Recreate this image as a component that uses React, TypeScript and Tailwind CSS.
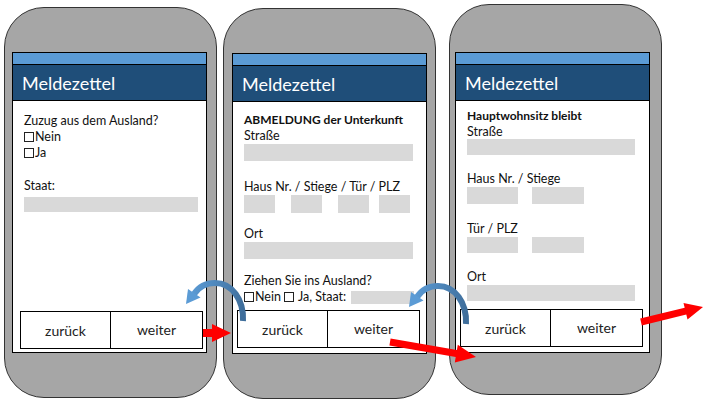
import React from 'react';

const Field = ({ className = '' }: { className?: string }) => (
  <div className={`bg-[#d9d9d9] ${className}`} />
);

const Box = () => (
  <span className="inline-block w-[10px] h-[10px] border border-[#222] align-[-1px] mr-[1px]" />
);

type PhoneProps = {
  className: string;
  screenClass: string;
  btnClass: string;
  children: React.ReactNode;
};

const Phone = ({ className, screenClass, btnClass, children }: PhoneProps) => (
  <div className={`w-[213px] h-[391px] shrink-0 rounded-[40px] border border-[#333] bg-[#a6a6a6] ${className}`}>
    <div className={`w-[195px] h-[301px] border border-black bg-white flex flex-col ${screenClass}`}>
      <div className="h-[12px] bg-[#5b9bd5] border-b border-black" />
      <div className="h-[36px] bg-[#1f4e79] border-b border-black flex items-center pl-[9px]">
        <span className="text-white text-[18px] leading-none">Meldezettel</span>
      </div>
      <div className="flex-1 flex flex-col pl-[11px] text-[12.5px] text-[#111]">
        {children}
        <div className={`mt-auto h-[38px] w-[183px] flex border border-black text-[14px] text-[#222] ${btnClass}`}>
          <div className="w-[90px] border-r border-black flex items-center justify-center">zurück</div>
          <div className="flex-1 flex items-center justify-center pb-[2px]">weiter</div>
        </div>
      </div>
    </div>
  </div>
);

function arrow(x1: number, y1: number, x2: number, y2: number, sw: number, hl: number, hw: number) {
  const dx = x2 - x1;
  const dy = y2 - y1;
  const len = Math.hypot(dx, dy);
  const ux = dx / len;
  const uy = dy / len;
  const px = -uy;
  const py = ux;
  const bx = x2 - ux * hl;
  const by = y2 - uy * hl;
  const pts = [
    [x1 + (px * sw) / 2, y1 + (py * sw) / 2],
    [bx + (px * sw) / 2, by + (py * sw) / 2],
    [bx + (px * hw) / 2, by + (py * hw) / 2],
    [x2, y2],
    [bx - (px * hw) / 2, by - (py * hw) / 2],
    [bx - (px * sw) / 2, by - (py * sw) / 2],
    [x1 - (px * sw) / 2, y1 - (py * sw) / 2],
  ];
  return pts.map((p) => p.map((v) => v.toFixed(1)).join(',')).join(' ');
}

const BlueArrow = () => (
  <>
    <path
      d="M 243 321 C 244 300, 232 283, 215 283 C 205 283, 198 288, 194 294"
      fill="none"
      stroke="url(#blueGrad)"
      strokeWidth="6"
    />
    <polygon points="186,304 200.5,297.5 188,289" fill="#5b9bd5" />
  </>
);

export default function App() {
  return (
    <div className="relative w-[709px] h-[404px] bg-white overflow-hidden font-['Lato',sans-serif]">
      <div className="flex items-start">
        {/* Zuzug */}
        <Phone className="ml-[4px] mt-[7px]" screenClass="mt-[44px] ml-[7px]" btnClass="ml-[-4px] mb-[3px]">
          <div className="pt-[12px] leading-[16px]">
            <div>Zuzug aus dem Ausland?</div>
            <div><Box />Nein</div>
            <div><Box />Ja</div>
          </div>
          <div className="mt-[17px] leading-[16px]">Staat:</div>
          <Field className="mt-[3px] h-[15px] w-[174px]" />
        </Phone>

        {/* Abmeldung */}
        <Phone className="ml-[6px] mt-[8px]" screenClass="mt-[44px] ml-[8px]" btnClass="ml-[-7px] mb-[5px] w-[182px]">
          <div className="pt-[9px] leading-[17px] font-bold text-[12px]">ABMELDUNG der Unterkunft</div>
          <div className="leading-[16px]">Straße</div>
          <Field className="h-[17px] w-[169px]" />
          <div className="mt-[18px] leading-[16px]">Haus Nr. / Stiege / Tür / PLZ</div>
          <div className="flex h-[18px]">
            <Field className="w-[31px]" />
            <Field className="w-[31px] ml-[16px]" />
            <Field className="w-[31px] ml-[16px]" />
            <Field className="w-[31px] ml-[10px]" />
          </div>
          <div className="mt-[13px] leading-[16px]">Ort</div>
          <Field className="h-[17px] w-[169px]" />
          <div className="mt-[14px] leading-[16px]">Ziehen Sie ins Ausland?</div>
          <div className="flex items-center h-[16px]">
            <span><Box />Nein <Box /> Ja, Staat:</span>
            <Field className="ml-[5px] h-[13px] w-[63px]" />
          </div>
        </Phone>

        {/* Hauptwohnsitz */}
        <Phone className="ml-[13px] mt-[4px]" screenClass="mt-[47px] ml-[5px]" btnClass="ml-[-7px] mb-[5px]">
          <div className="pt-[7px] leading-[16px] font-bold text-[12px]">Hauptwohnsitz bleibt</div>
          <div className="leading-[15px]">Straße</div>
          <Field className="h-[16px] w-[168px]" />
          <div className="mt-[16px] leading-[16px]">Haus Nr. / Stiege</div>
          <div className="flex h-[17px]">
            <Field className="w-[51px]" />
            <Field className="w-[52px] ml-[14px]" />
          </div>
          <div className="mt-[17px] leading-[16px]">Tür / PLZ</div>
          <div className="flex h-[16px]">
            <Field className="w-[51px]" />
            <Field className="w-[52px] ml-[14px]" />
          </div>
          <div className="mt-[16px] leading-[16px]">Ort</div>
          <Field className="h-[16px] w-[168px]" />
        </Phone>
      </div>

      <svg className="absolute inset-0 pointer-events-none" width="709" height="404" viewBox="0 0 709 404">
        <defs>
          <linearGradient id="blueGrad" gradientUnits="userSpaceOnUse" x1="190" y1="290" x2="245" y2="300">
            <stop offset="0" stopColor="#5b9bd5" />
            <stop offset="1" stopColor="#3f6e9b" />
          </linearGradient>
        </defs>
        <BlueArrow />
        <g transform="translate(223,3)">
          <BlueArrow />
        </g>
        <polygon points={arrow(203, 333, 231, 333, 8, 19, 18)} fill="#ff0000" />
        <polygon points={arrow(390, 342, 476, 357, 7, 20, 18)} fill="#ff0000" />
        <polygon points={arrow(641, 322, 703, 307, 7, 18, 17)} fill="#ff0000" />
      </svg>
    </div>
  );
}
